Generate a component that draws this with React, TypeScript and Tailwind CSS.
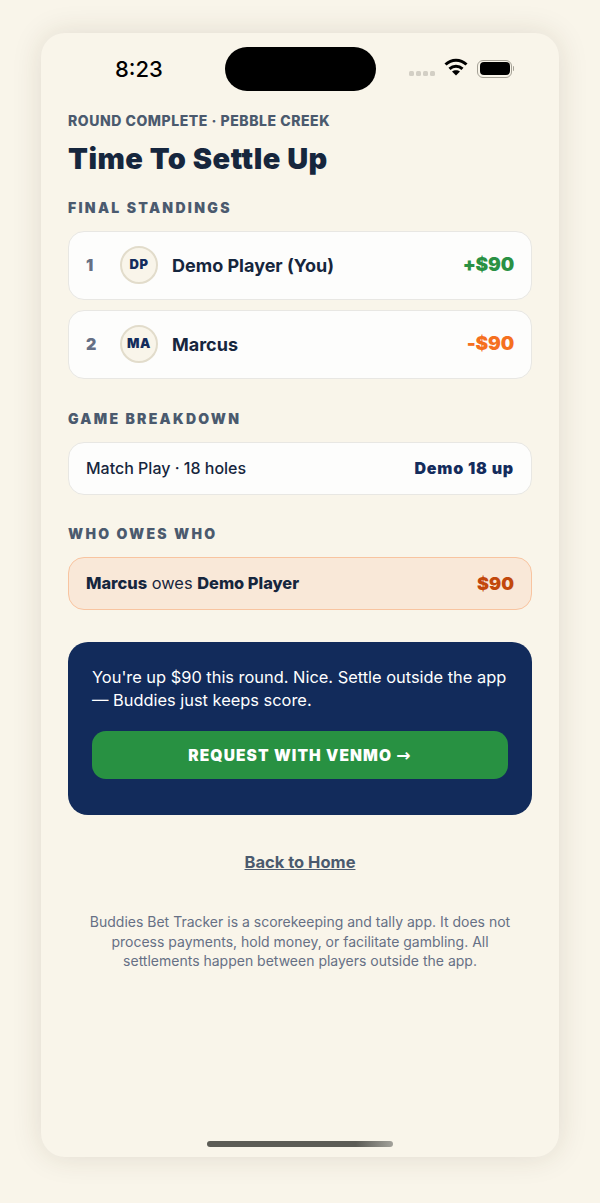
const body = "font-['Inter','Noto_Sans',sans-serif]";
const heavy = "font-['Inter','Liberation_Sans',sans-serif] font-black";

function StatusBar() {
  return (
    <div className="relative flex h-[70px] items-center justify-between pl-[74px] pr-[45px] pt-[1px]">
      <span className="text-[22px] font-medium leading-none text-black font-['Inter',sans-serif]">8:23</span>
      <div className="absolute left-[184px] top-[14px] h-[44px] w-[151px] rounded-[22px] bg-black" />
      <div className="flex items-center">
        <div className="mr-[9px] mt-[10px] flex gap-[2px]">
          <span className="h-[5px] w-[5px] rounded-[1.5px] bg-[#d3cfc5]" />
          <span className="h-[5px] w-[5px] rounded-[1.5px] bg-[#d3cfc5]" />
          <span className="h-[5px] w-[5px] rounded-[1.5px] bg-[#d3cfc5]" />
          <span className="h-[5px] w-[5px] rounded-[1.5px] bg-[#d3cfc5]" />
        </div>
        <svg width="24" height="18" viewBox="0 0 24 18" className="mr-[9px] mt-[-3px]" fill="none" stroke="black" strokeWidth="3">
          <path d="M1.5 6.5C7.5 0.8 16.5 0.8 22.5 6.5" />
          <path d="M5.5 10.8C9.3 7.3 14.7 7.3 18.5 10.8" />
          <path d="M12 17.5L8 13.5C10.3 11.7 13.7 11.7 16 13.5Z" fill="black" stroke="none" />
        </svg>
        <div className="flex items-center">
          <div className="flex h-[18px] w-[35px] items-center justify-center rounded-[6px] border-[1.5px] border-[#a5a196] p-[1px]">
            <div className="h-[13px] w-[30px] rounded-[4px] bg-black" />
          </div>
          <div className="ml-[1px] h-[5px] w-[1px] rounded-r bg-[#a5a196]" />
        </div>
      </div>
    </div>
  );
}

function SectionLabel({ children }: { children: React.ReactNode }) {
  return <div className={`${heavy} text-[14px] leading-none tracking-[2.3px] text-[#4b5a6e]`}>{children}</div>;
}

function StandingRow({ rank, initials, name, amount, amountClass }: { rank: number; initials: string; name: string; amount: string; amountClass: string }) {
  return (
    <div className="flex h-[69px] items-center rounded-[16px] border-[1.5px] border-[#e8e7e3] bg-[#fdfdfc] pl-[17px] pr-[17px]">
      <span className={`${heavy} w-[34px] text-[16px] text-[#667085]`}>{rank}</span>
      <div className={`${heavy} flex h-[38px] w-[38px] items-center justify-center rounded-full border-2 border-[#e2dccb] bg-[#f9f5ea] text-[13px] tracking-[0.5px] text-[#142c5c]`}>
        {initials}
      </div>
      <span className="ml-[14px] flex-1 text-[18px] font-bold text-[#16263d]">{name}</span>
      <span className={`${heavy} pt-[1px] text-[19px] tracking-[-0.2px] ${amountClass}`}>{amount}</span>
    </div>
  );
}

export default function App() {
  return (
    <div className={`${body} flex h-[1203px] justify-center bg-[#f9f5ea] pt-[33px]`}>
      <div className="flex h-[1124px] w-[518px] flex-col rounded-[24px] bg-[#f9f5ea] shadow-[0_0_30px_rgba(60,50,20,0.13)]">
        <StatusBar />
        <div className="flex flex-1 flex-col px-[27px]">
          <div className="mt-[9px] text-[14px] font-extrabold leading-[17px] tracking-[0.55px] text-[#4b5a6e]">ROUND COMPLETE · PEBBLE CREEK</div>
          <h1 className={`${heavy} mt-[13px] text-[29px] leading-[34px] tracking-[0.5px] text-[#16263d]`}>Time To Settle Up</h1>
          <div className="mt-[25px]"><SectionLabel>FINAL STANDINGS</SectionLabel></div>

          <div className="mt-[15.5px] flex flex-col gap-[10px]">
            <StandingRow rank={1} initials="DP" name="Demo Player (You)" amount="+$90" amountClass="text-[#2a9144]" />
            <StandingRow rank={2} initials="MA" name="Marcus" amount="-$90" amountClass="text-[#f5701f]" />
          </div>

          <div className="mt-[33.5px]"><SectionLabel>GAME BREAKDOWN</SectionLabel></div>
          <div className="mt-[15.5px] flex h-[53px] items-center justify-between rounded-[16px] border-[1.5px] border-[#e8e7e3] bg-[#fdfdfc] px-[17px]">
            <span className="text-[16px] font-medium text-[#16263d]">Match Play · 18 holes</span>
            <span className={`${heavy} text-[16px] tracking-[0.8px] text-[#142c5c]`}>Demo 18 up</span>
          </div>

          <div className="mt-[32.5px]"><SectionLabel>WHO OWES WHO</SectionLabel></div>
          <div className="mt-[16px] flex h-[53px] items-center justify-between rounded-[16px] border-[1.5px] border-[#f8c4a0] bg-[#f9e8d8] px-[17px]">
            <span className="text-[16.4px] text-[#16263d]"><b className="font-extrabold">Marcus</b> owes <b className="font-extrabold">Demo Player</b></span>
            <span className={`${heavy} text-[18px] text-[#c2480c]`}>$90</span>
          </div>

          <div className="mt-[32px] rounded-[20px] bg-[#122b5b] px-[24px] pb-[36px] pt-[24px]">
            <p className="text-[16.4px] leading-[23px] text-white">You're up $90 this round. Nice. Settle outside the app — Buddies just keeps score.</p>
            <button className={`${heavy} mt-[19px] h-[48px] w-full rounded-[14px] bg-[#289142] pt-[1px] text-[15.5px] tracking-[1.1px] text-white`}>
              REQUEST WITH VENMO <span className="font-['DejaVu_Sans',sans-serif] text-[17px] font-bold">→</span>
            </button>
          </div>

          <a className="mt-[37px] self-center text-[16.5px] font-bold leading-[20px] text-[#4b5a6e] underline">Back to Home</a>
          <p className="mt-[40px] px-[14px] text-center text-[14px] leading-[19.5px] text-[#667085]">
            Buddies Bet Tracker is a scorekeeping and tally app. It does not process payments, hold money, or facilitate gambling. All settlements happen between players outside the app.
          </p>

          <div className="mb-[10px] mt-auto h-[6px] w-[186px] self-center rounded-[3px] bg-gradient-to-r from-[#5c5c56] from-80% to-[#a3a29b]" />
        </div>
      </div>
    </div>
  );
}
